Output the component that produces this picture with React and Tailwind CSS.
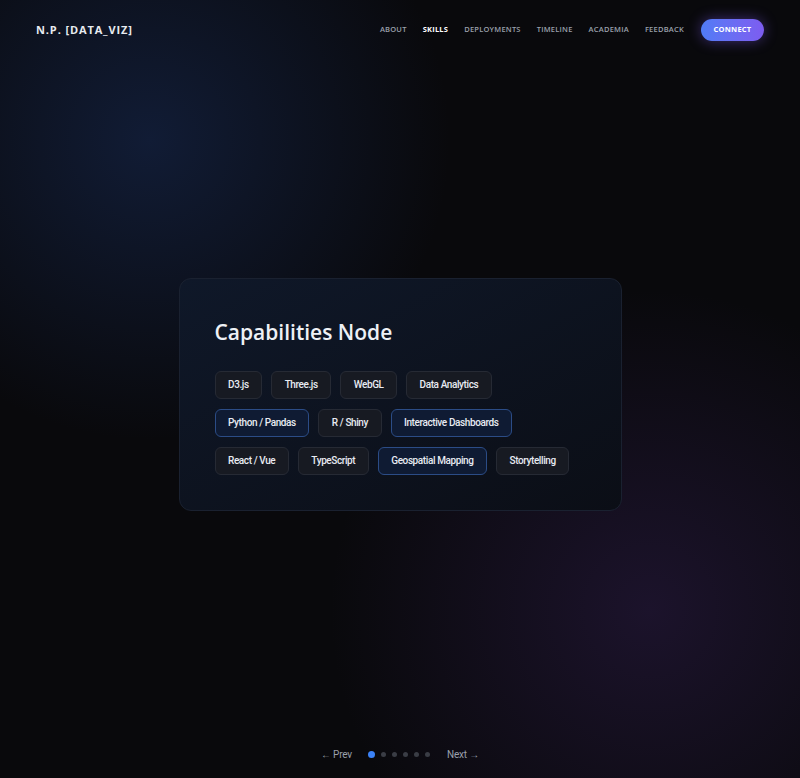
import React from 'react';

const navItems = ['About', 'Skills', 'Deployments', 'Timeline', 'Academia', 'Feedback'];

const skills = [
  ['D3.js', false],
  ['Three.js', false],
  ['WebGL', false],
  ['Data Analytics', false],
  ['Python / Pandas', true],
  ['R / Shiny', false],
  ['Interactive Dashboards', true],
  ['React / Vue', false],
  ['TypeScript', false],
  ['Geospatial Mapping', true],
  ['Storytelling', false],
];

function SkillChip({ label, active }) {
  return (
    <span
      className={
        active
          ? 'h-[28px] px-[12.5px] flex items-center rounded-[6px] border border-[#2b4c86] bg-[#0f1b33] font-["Roboto",sans-serif] text-[10px] font-medium tracking-[-0.04em] text-[#e8ebf2]'
          : 'h-[28px] px-[12.5px] flex items-center rounded-[6px] border border-[#262a34] bg-[#171a22] font-["Roboto",sans-serif] text-[10px] font-medium tracking-[-0.04em] text-[#e8ebf2]'
      }
    >
      {label}
    </span>
  );
}

export default function App() {
  return (
    <div className="h-[778px] flex flex-col bg-[#09090c] bg-[radial-gradient(circle_at_150px_140px,rgba(28,54,110,0.42),transparent_300px),radial-gradient(circle_at_650px_610px,rgba(64,38,104,0.34),transparent_320px)] font-['Open_Sans',sans-serif] overflow-hidden">
      {/* Header */}
      <header className="h-[58px] pt-[2px] flex items-center justify-between pl-[36px] pr-[36px]">
        <div className="text-[11px] font-bold tracking-[0.08em] text-[#e8ebf0]">N.P. [DATA_VIZ]</div>
        <nav className="flex items-center">
          <div className="flex items-center gap-[16px] mr-[17px]">
            {navItems.map((item) => (
              <a
                key={item}
                className={
                  item === 'Skills'
                    ? 'text-[7.5px] font-bold uppercase tracking-[0.03em] text-white'
                    : 'text-[7.5px] font-semibold uppercase tracking-[0.03em] text-[#9aa0ab]'
                }
              >
                {item}
              </a>
            ))}
          </div>
          <button className="h-[22px] w-[63px] rounded-full bg-gradient-to-r from-[#4f7cf6] to-[#7d5cf0] text-[7.5px] font-bold tracking-[0.03em] text-white shadow-[0_0_14px_rgba(124,92,240,0.45)]">
            CONNECT
          </button>
        </nav>
      </header>

      {/* Main */}
      <main className="flex-1 flex items-center justify-center">
        <section className="w-[443px] h-[233px] rounded-[12px] border border-[#1a2130] bg-gradient-to-br from-[#0f1829] to-[#0b0e16] pl-[35px] pr-[30px] pt-[38px]">
          <h2 className="text-[21px] font-semibold text-[#eef1f6] leading-[30px]">Capabilities Node</h2>
          <div className="mt-[24px] flex flex-wrap gap-x-[9px] gap-y-[10px]">
            {skills.map(([label, active]) => (
              <SkillChip key={label} label={label} active={active} />
            ))}
          </div>
        </section>
      </main>

      {/* Pagination */}
      <footer className="h-[48px] flex items-center justify-center">
        <div className="flex items-center h-[14px] font-['Roboto',sans-serif] text-[10px] tracking-[-0.02em] text-[#9aa0ab]">
          <span>← Prev</span>
          <div className="flex items-center gap-[6px] ml-[16px] mr-[17px]">
            <span className="w-[7px] h-[7px] rounded-full bg-[#3b82f6]"></span>
            <span className="w-[5px] h-[5px] rounded-full bg-[#3a3d45]"></span>
            <span className="w-[5px] h-[5px] rounded-full bg-[#3a3d45]"></span>
            <span className="w-[5px] h-[5px] rounded-full bg-[#3a3d45]"></span>
            <span className="w-[5px] h-[5px] rounded-full bg-[#3a3d45]"></span>
            <span className="w-[5px] h-[5px] rounded-full bg-[#3a3d45]"></span>
          </div>
          <span>Next →</span>
        </div>
      </footer>
    </div>
  );
}
